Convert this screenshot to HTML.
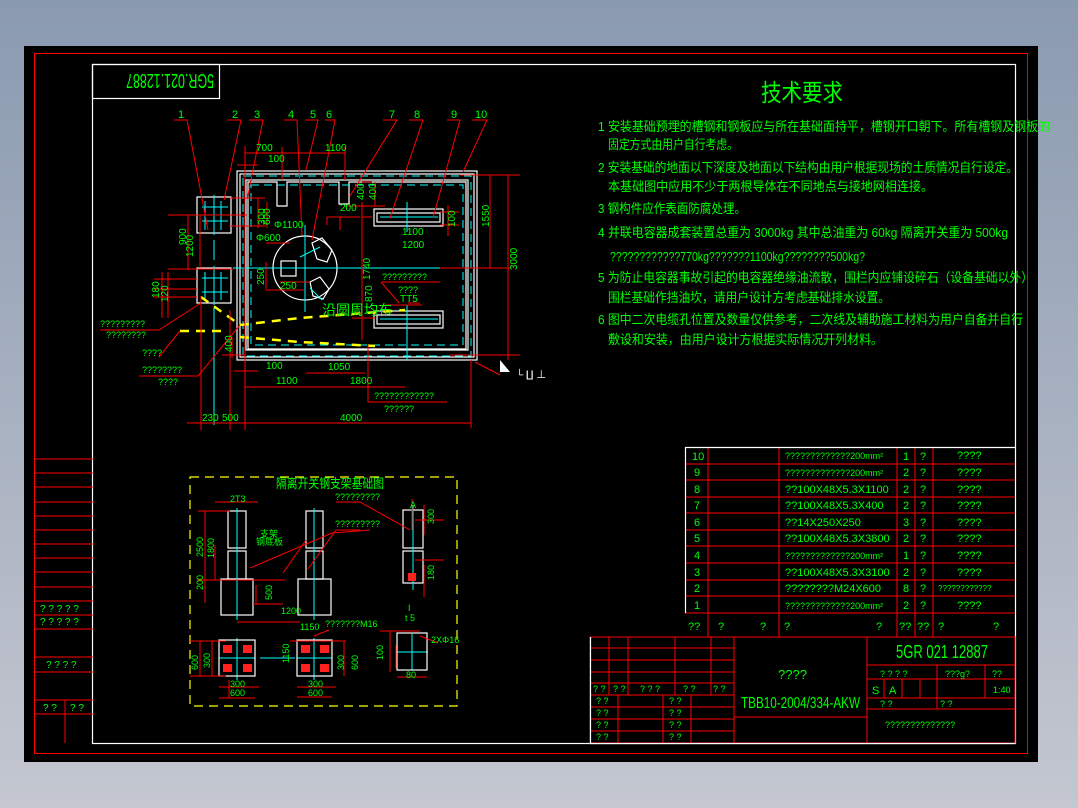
<!DOCTYPE html>
<html><head><meta charset="utf-8"><style>
html,body{margin:0;padding:0;width:1078px;height:808px;overflow:hidden}
svg{display:block}
text{font-family:"Liberation Sans","WenQuanYi Zen Hei","Noto Sans CJK SC",sans-serif;fill:#00ff00}
.r{stroke:#ff0000;fill:none;stroke-width:1}
.w{stroke:#ffffff;fill:none;stroke-width:1.2}
.c{stroke:#00ffff;fill:none;stroke-width:1}
.y{stroke:#ffff00;fill:none;stroke-width:2.5;stroke-dasharray:9 7}
</style></head><body>
<svg width="1078" height="808" viewBox="0 0 1078 808" xmlns="http://www.w3.org/2000/svg">
<defs><linearGradient id="bg" x1="0" y1="0" x2="0" y2="1"><stop offset="0" stop-color="#8a9ab0"/><stop offset="1" stop-color="#c4c7d0"/></linearGradient></defs>
<rect width="1078" height="808" fill="url(#bg)"/>
<rect x="24" y="46" width="1014" height="716" fill="#000"/>
<rect x="34.5" y="53.5" width="993" height="700" class="r"/>
<rect x="92.5" y="64.5" width="923" height="679" class="w"/>
<!-- drawing number box top-left -->
<rect x="92.5" y="64.5" width="127" height="34" class="w"/>
<text x="0" y="0" font-size="20" transform="translate(214,74) rotate(180)" textLength="88" lengthAdjust="spacingAndGlyphs">5GR.021.12887</text>

<!-- left column title block -->
<g class="r">
<line x1="35" y1="459" x2="94" y2="459"/><line x1="35" y1="473" x2="94" y2="473"/><line x1="35" y1="487" x2="94" y2="487"/><line x1="35" y1="502" x2="94" y2="502"/><line x1="35" y1="516" x2="94" y2="516"/><line x1="35" y1="530" x2="94" y2="530"/><line x1="35" y1="544" x2="94" y2="544"/><line x1="35" y1="558" x2="94" y2="558"/><line x1="35" y1="572" x2="94" y2="572"/><line x1="35" y1="587" x2="94" y2="587"/><line x1="35" y1="601" x2="94" y2="601"/><line x1="35" y1="615" x2="94" y2="615"/><line x1="35" y1="629" x2="94" y2="629"/><line x1="35" y1="657" x2="94" y2="657"/><line x1="35" y1="672" x2="94" y2="672"/><line x1="35" y1="700" x2="94" y2="700"/><line x1="35" y1="714" x2="94" y2="714"/><line x1="65" y1="700" x2="65" y2="743"/>
</g>
<g font-size="10">
<text x="40" y="612">? ? ? ? ?</text><text x="40" y="625">? ? ? ? ?</text><text x="46" y="668">? ? ? ?</text><text x="43" y="711">? ?</text><text x="70" y="711">? ?</text>
</g>

<!-- technical requirements -->
<text x="761" y="101" font-size="24" textLength="82" lengthAdjust="spacingAndGlyphs">技术要求</text>
<g font-size="13">
<text x="598" y="131" textLength="452" lengthAdjust="spacingAndGlyphs">1 安装基础预埋的槽钢和钢板应与所在基础面持平，槽钢开口朝下。所有槽钢及钢板的</text>
<text x="608" y="149" textLength="130" lengthAdjust="spacingAndGlyphs">固定方式由用户自行考虑。</text>
<text x="598" y="172" textLength="420" lengthAdjust="spacingAndGlyphs">2 安装基础的地面以下深度及地面以下结构由用户根据现场的土质情况自行设定。</text>
<text x="608" y="191" textLength="325" lengthAdjust="spacingAndGlyphs">本基础图中应用不少于两根导体在不同地点与接地网相连接。</text>
<text x="598" y="213" textLength="148" lengthAdjust="spacingAndGlyphs">3 钢构件应作表面防腐处理。</text>
<text x="598" y="237" textLength="410" lengthAdjust="spacingAndGlyphs">4 并联电容器成套装置总重为 3000kg 其中总油重为 60kg 隔离开关重为 500kg</text>
<text x="610" y="261" textLength="255" lengthAdjust="spacingAndGlyphs">????????????770kg???????1100kg????????500kg?</text>
<text x="598" y="282" textLength="435" lengthAdjust="spacingAndGlyphs">5 为防止电容器事故引起的电容器绝缘油流散，围栏内应铺设碎石（设备基础以外）</text>
<text x="608" y="302" textLength="282" lengthAdjust="spacingAndGlyphs">围栏基础作挡油坎，请用户设计方考虑基础排水设置。</text>
<text x="598" y="324" textLength="425" lengthAdjust="spacingAndGlyphs">6 图中二次电缆孔位置及数量仅供参考，二次线及辅助施工材料为用户自备并自行</text>
<text x="608" y="344" textLength="275" lengthAdjust="spacingAndGlyphs">敷设和安装，由用户设计方根据实际情况开列材料。</text>
</g>

<!-- main plan -->
<g>
<rect x="237" y="171" width="240" height="189" class="w"/>
<rect x="240" y="174" width="234" height="183" class="w" stroke-width="0.8"/>
<rect x="246" y="180" width="222" height="170" class="w" stroke-width="0.8"/>
<path class="w" d="M248 182 H277 V206 H287 V182 H339 V204 H349 V182 H466 V349 H248 Z"/>
<rect x="243" y="176" width="228" height="180" class="c" stroke-dasharray="8 5"/>
<rect x="251" y="185" width="212" height="160" class="c" stroke-dasharray="8 5"/>
<!-- side boxes -->
<rect x="197" y="197" width="34" height="36" class="w"/>
<rect x="197" y="268" width="34" height="35" class="w"/>
<path class="c" d="M214 195 V235 M202 207 H228 M202 221 H228 M205 201 V230 M221 201 V230 M214 266 V305 M202 278 H228 M202 292 H228 M205 272 V300 M221 272 V300 M214 240 V260 M214 308 V425"/>
<!-- circle -->
<circle cx="305" cy="268" r="32" class="w"/>
<rect x="281" y="261" width="15" height="15" class="w"/>
<path class="w" d="M312 243 l10 -5 l10 12 l-5 12 l-10 -3 z M310 282 l10 -5 l9 12 l-6 10 l-10 -3 z"/>
<path class="c" d="M233 268 H468 M305 225 V312 M300 257 l20 -10 M310 288 l12 12"/>
<!-- right rectangles -->
<rect x="374" y="209" width="69" height="17" class="w"/>
<rect x="377" y="213" width="63" height="9" class="w" stroke-width="0.8"/>
<rect x="374" y="311" width="69" height="17" class="w"/>
<rect x="377" y="315" width="63" height="9" class="w" stroke-width="0.8"/>
<path class="c" d="M380 217 H438 M380 319 H438 M407 202 V232 M407 305 V360 M367 268 H420"/>
<!-- yellow dashed -->
<path class="y" d="M201 297 L240 325 L300 318 L405 310 M180 331 L228 331 M240 337 L300 342 L375 346"/>
<!-- red leader & dimension lines -->
<g class="r">
<path d="M174 120 H187 L208 230 M227 120 H241 L224 200 M249 120 H263 L247 200 M284 120 H297 L302 235 M305 120 H318 L306 170 M325 120 H335 L312 240 M383 120 H397 L350 196 M409 120 H423 L390 218 M447 120 H460 L433 218 M472 120 H487 L463 172"/>
<path d="M245 153 H345 M245 146 V375 M237 165 H258 M282 147 V180 M345 147 V180"/>
<path d="M168 215 H247 M168 269 H233 M188 215 V270 M200 215 V268 M229 198 H265 M229 226 H265 M258 198 V228 M267 202 V228 M154 279 H197 M154 289 H197 M154 297 H197 M162 272 V318 M168 272 V318"/>
<path d="M327 217 H360 M340 217 V230 M362 182 H372 M362 202 V235 M375 182 V205 M345 206 H385 M362 217 H372 M327 217 V225 M362 218 V340 M352 318 H375"/>
<path d="M460 175 H520 M440 268 H510 M490 175 V268 M508 175 V360 M450 355 H520 M448 205 V236 M440 212 H459 M440 225 H459"/>
<path d="M266 243 H290 M266 290 H304 M266 262 V289 M280 282 H310"/>
<path d="M382 282 H440 M381 282 L399 303 M385 305 H422 M408 303 H420"/>
<path d="M100 330 H159 L201 303 M159 357 L180 331 M139 376 H198 L240 325 M232 337 V358 M222 355 H245"/>
<path d="M234 371 H258 M306 373 H365 M245 387 H405 M306 387 H306 M368 345 V402 H447"/>
<path d="M187 423 H471 M201 296 V430 M230 310 V430 M245 360 V430 M471 360 V428 M475 362 L500 375"/>
</g>
<path d="M500 360 v12 h10 z" fill="#fff"/>
<text x="516" y="378" font-size="10" fill="#fff" style="fill:#fff">└ ∐ ⊥</text>
<g font-size="11">
<text x="178" y="118">1</text><text x="232" y="118">2</text><text x="254" y="118">3</text><text x="288" y="118">4</text><text x="310" y="118">5</text><text x="326" y="118">6</text><text x="389" y="118">7</text><text x="414" y="118">8</text><text x="451" y="118">9</text><text x="475" y="118">10</text>
</g>
<g font-size="10">
<text x="256" y="151">700</text><text x="268" y="162">100</text><text x="325" y="151">1100</text>
<text x="274" y="228">Φ1100</text><text x="256" y="241">Φ600</text>
<text x="280" y="289">250</text><text x="340" y="211">200</text>
<text x="402" y="235">1100</text><text x="402" y="248">1200</text>
<text x="382" y="280" font-size="9">?????????</text><text x="398" y="293" font-size="9">????</text><text x="400" y="302">TT5</text>
<text x="322" y="315" font-size="14">沿圆周均布</text>
<text x="100" y="327" font-size="9">?????????</text><text x="106" y="338" font-size="9">????????</text>
<text x="142" y="356" font-size="9">????</text><text x="142" y="373" font-size="9">????????</text><text x="158" y="385" font-size="9">????</text>
<text x="266" y="369">100</text><text x="328" y="370">1050</text><text x="276" y="384">1100</text><text x="350" y="384">1800</text>
<text x="374" y="399" font-size="9">????????????</text><text x="384" y="412" font-size="9">??????</text>
<text x="202" y="421">230</text><text x="222" y="421">500</text><text x="340" y="421">4000</text>
<text transform="translate(193,257) rotate(-90)">1200</text><text transform="translate(186,245) rotate(-90)">900</text>
<text transform="translate(265,225) rotate(-90)">300</text><text transform="translate(270,225) rotate(-90)">600</text>
<text transform="translate(159,298) rotate(-90)">180</text><text transform="translate(168,302) rotate(-90)">120</text>
<text transform="translate(232,352) rotate(-90)">400</text><text transform="translate(264,285) rotate(-90)">250</text>
<text transform="translate(370,280) rotate(-90)">1740</text><text transform="translate(372,302) rotate(-90)">870</text>
<text transform="translate(364,200) rotate(-90)">400</text><text transform="translate(376,200) rotate(-90)">400</text>
<text transform="translate(455,227) rotate(-90)">100</text><text transform="translate(489,227) rotate(-90)">1550</text>
<text transform="translate(517,270) rotate(-90)">3000</text>
</g>
</g>

<!-- switch bracket drawing -->
<rect x="190" y="477" width="267" height="229" fill="none" stroke="#ffff00" stroke-width="1.2" stroke-dasharray="9 6"/>
<text x="276" y="488" font-size="13" textLength="108" lengthAdjust="spacingAndGlyphs">隔离开关钢支架基础图</text>
<g>
<rect x="228" y="511" width="18" height="37" class="w"/><rect x="228" y="551" width="18" height="28" class="w"/>
<rect x="221" y="579" width="32" height="36" class="w"/>
<rect x="306" y="511" width="17" height="37" class="w"/><rect x="306" y="551" width="17" height="28" class="w"/>
<rect x="298" y="579" width="33" height="36" class="w"/>
<rect x="403" y="510" width="20" height="38" class="w"/><rect x="403" y="551" width="20" height="32" class="w"/>
<path class="c" d="M237 508 V620 M314 508 V620 M413 505 V590 M219 658 H255 M237 636 H237 M237 638 V680 M297 658 H332 M314 638 V680 M260 658 H295 M397 652 H428 M412 634 V670"/>
<rect x="219" y="640" width="36" height="36" class="w"/><rect x="297" y="640" width="35" height="36" class="w"/>
<rect x="397" y="633" width="30" height="37" class="w"/>
<g fill="#ff2020"><rect x="223" y="645" width="9" height="8"/><rect x="243" y="645" width="9" height="8"/><rect x="223" y="664" width="9" height="8"/><rect x="243" y="664" width="9" height="8"/><rect x="301" y="645" width="9" height="8"/><rect x="320" y="645" width="9" height="8"/><rect x="301" y="664" width="9" height="8"/><rect x="320" y="664" width="9" height="8"/><rect x="408" y="573" width="8" height="8"/></g>
<g class="r">
<path d="M198 511 H230 M205 511 V603 M215 545 V580 M197 580 H285 M256 585 V604 M253 604 H283 M237 622 H300 M215 502 H258 M283 573 L306 540 M308 569 L336 530 L360 530 M250 568 L332 533 L370 530 M336 502 L360 502 L410 530 M412 499 V530 M424 505 V535 M424 565 V597 M415 520 H444 M415 560 H444 M190 641 H226 M190 676 H226 M200 641 V676 M212 641 V676 M219 687 H259 M219 698 H255 M229 680 V698 M297 687 H336 M297 697 H332 M290 641 H346 M344 641 V676 M314 636 L329 630 M380 631 H420 M390 631 V672 M396 645 V668 M397 677 H427 M420 636 L438 643"/>
</g>
<g font-size="9">
<text x="230" y="502">2T3</text><text x="260" y="537">支架</text><text x="256" y="545">钢底板</text>
<text x="335" y="500">?????????</text><text x="335" y="527">?????????</text>
<text x="281" y="614">1200</text><text x="300" y="630">1150</text><text x="325" y="627">???????M16</text>
<text x="410" y="508">A</text><text x="408" y="611">I</text><text x="405" y="621">t  5</text>
<text x="230" y="687">300</text><text x="230" y="696">600</text><text x="308" y="687">300</text><text x="308" y="696">600</text>
<text x="406" y="678">80</text><text x="431" y="643">2XΦ16</text>
<text transform="translate(203,557) rotate(-90)">2500</text><text transform="translate(214,558) rotate(-90)">1800</text>
<text transform="translate(203,590) rotate(-90)">200</text><text transform="translate(272,600) rotate(-90)">500</text>
<text transform="translate(198,670) rotate(-90)">600</text><text transform="translate(210,668) rotate(-90)">300</text>
<text transform="translate(289,663) rotate(-90)">1150</text><text transform="translate(344,670) rotate(-90)">300</text><text transform="translate(358,670) rotate(-90)">600</text>
<text transform="translate(383,660) rotate(-90)">100</text><text transform="translate(434,524) rotate(-90)">300</text><text transform="translate(434,580) rotate(-90)">180</text>
</g>
</g>

<!-- parts table -->
<g class="r">
<line x1="685" y1="464" x2="1015" y2="464"/><line x1="685" y1="480" x2="1015" y2="480"/><line x1="685" y1="497" x2="1015" y2="497"/><line x1="685" y1="513" x2="1015" y2="513"/><line x1="685" y1="530" x2="1015" y2="530"/><line x1="685" y1="546" x2="1015" y2="546"/><line x1="685" y1="563" x2="1015" y2="563"/><line x1="685" y1="580" x2="1015" y2="580"/><line x1="685" y1="596" x2="1015" y2="596"/><line x1="685" y1="613" x2="1015" y2="613"/><line x1="685" y1="637" x2="1015" y2="637"/>
<line x1="708" y1="447" x2="708" y2="637"/><line x1="779" y1="447" x2="779" y2="637"/><line x1="897" y1="447" x2="897" y2="637"/><line x1="915" y1="447" x2="915" y2="637"/><line x1="933" y1="447" x2="933" y2="637"/>
</g>
<path class="w" d="M685.5 613 V447.5 H1015" stroke-width="1"/>
<g font-size="11">
<text x="692" y="460">10</text><text x="694" y="476">9</text><text x="694" y="493">8</text><text x="694" y="509">7</text><text x="694" y="526">6</text><text x="694" y="542">5</text><text x="694" y="559">4</text><text x="694" y="576">3</text><text x="694" y="592">2</text><text x="694" y="609">1</text>
<text x="785" y="459" font-size="9">?????????????200mm²</text>
<text x="785" y="476" font-size="9">?????????????200mm²</text>
<text x="785" y="493">??100X48X5.3X1100</text>
<text x="785" y="509">??100X48X5.3X400</text>
<text x="785" y="526">??14X250X250</text>
<text x="785" y="542">??100X48X5.3X3800</text>
<text x="785" y="559" font-size="9">?????????????200mm²</text>
<text x="785" y="576">??100X48X5.3X3100</text>
<text x="785" y="592">????????M24X600</text>
<text x="785" y="609" font-size="9">?????????????200mm²</text>
<text x="903" y="460">1</text><text x="903" y="476">2</text><text x="903" y="493">2</text><text x="903" y="509">2</text><text x="903" y="526">3</text><text x="903" y="542">2</text><text x="903" y="559">1</text><text x="903" y="576">2</text><text x="903" y="592">8</text><text x="903" y="609">2</text>
<text x="920" y="460">?</text><text x="920" y="476">?</text><text x="920" y="493">?</text><text x="920" y="509">?</text><text x="920" y="526">?</text><text x="920" y="542">?</text><text x="920" y="559">?</text><text x="920" y="576">?</text><text x="920" y="592">?</text><text x="920" y="609">?</text>
<text x="957" y="459">????</text><text x="957" y="476">????</text><text x="957" y="493">????</text><text x="957" y="509">????</text><text x="957" y="526">????</text><text x="957" y="542">????</text><text x="957" y="559">????</text><text x="957" y="576">????</text><text x="938" y="591" font-size="8">????????????</text><text x="957" y="609">????</text>
<text x="688" y="630">??</text><text x="718" y="630">?</text><text x="760" y="630">?</text><text x="784" y="630">?</text><text x="876" y="630">?</text><text x="899" y="630">??</text><text x="917" y="630">??</text><text x="938" y="630">?</text><text x="993" y="630">?</text>
</g>

<!-- title block -->
<g class="r">
<rect x="590" y="637" width="425" height="106"/>
<line x1="590" y1="648" x2="734" y2="648"/><line x1="590" y1="660" x2="734" y2="660"/><line x1="590" y1="672" x2="734" y2="672"/><line x1="590" y1="683" x2="734" y2="683"/><line x1="590" y1="695" x2="734" y2="695"/><line x1="590" y1="707" x2="734" y2="707"/><line x1="590" y1="719" x2="734" y2="719"/><line x1="590" y1="731" x2="734" y2="731"/>
<line x1="609" y1="637" x2="609" y2="695"/><line x1="628" y1="637" x2="628" y2="695"/><line x1="675" y1="637" x2="675" y2="695"/><line x1="711" y1="637" x2="711" y2="695"/>
<line x1="618" y1="695" x2="618" y2="743"/><line x1="663" y1="695" x2="663" y2="743"/><line x1="691" y1="695" x2="691" y2="743"/>
<line x1="734" y1="637" x2="734" y2="743"/><line x1="734" y1="717" x2="867" y2="717"/><line x1="867" y1="637" x2="867" y2="743"/>
<line x1="867" y1="665" x2="1015" y2="665"/><line x1="867" y1="679" x2="1015" y2="679"/><line x1="867" y1="698" x2="1015" y2="698"/><line x1="867" y1="709" x2="1015" y2="709"/>
<line x1="937" y1="665" x2="937" y2="709"/><line x1="985" y1="665" x2="985" y2="698"/><line x1="884" y1="679" x2="884" y2="698"/><line x1="902" y1="679" x2="902" y2="698"/><line x1="920" y1="679" x2="920" y2="698"/>
</g>
<path class="w" d="M590.5 637 V743.5 H1015" stroke-width="1"/>
<g font-size="9">
<text x="593" y="692">? ?</text><text x="613" y="692">? ?</text><text x="640" y="692">? ? ?</text><text x="683" y="692">?  ?</text><text x="713" y="692">? ?</text>
<text x="596" y="704">? ?</text><text x="596" y="716">? ?</text><text x="596" y="728">? ?</text><text x="596" y="740">? ?</text>
<text x="669" y="704">? ?</text><text x="669" y="716">? ?</text><text x="669" y="728">? ?</text><text x="669" y="740">? ?</text>
<text x="880" y="677">?  ?  ?  ?</text><text x="945" y="677">???g?</text><text x="992" y="677">??</text>
<text x="880" y="707">?          ?</text><text x="940" y="707">?          ?</text>
<text x="885" y="728">??????????????</text>
</g>
<text x="778" y="679" font-size="13">????</text>
<text x="741" y="708" font-size="16" textLength="119" lengthAdjust="spacingAndGlyphs">TBB10-2004/334-AKW</text>
<text x="896" y="658" font-size="18" textLength="92" lengthAdjust="spacingAndGlyphs">5GR 021 12887</text>
<text x="872" y="694" font-size="11">S</text><text x="889" y="694" font-size="11">A</text><text x="993" y="693" font-size="9">1:40</text>
</svg>
</body></html>
